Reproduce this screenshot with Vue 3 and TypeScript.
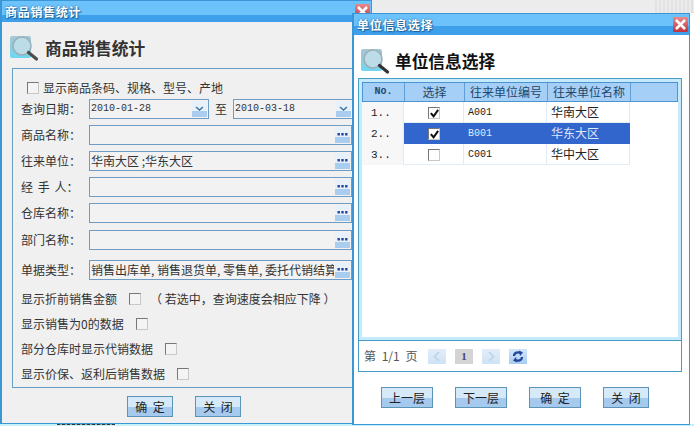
<script setup lang="ts">
interface Field { label: string; value: string; gap: number; clip?: boolean }
interface Opt { label: string; note?: string; gap: number; top: number }
interface Row { no: string; checked: boolean; code: string; name: string; active: boolean }

const fields: Field[] = [
  { label: '商品名称：', value: '', gap: 6 },
  { label: '往来单位：', value: '华南大区 ;华东大区', gap: 6 },
  { label: '经 手 人：', value: '', gap: 6 },
  { label: '仓库名称：', value: '', gap: 6 },
  { label: '部门名称：', value: '', gap: 7 },
  { label: '单据类型：', value: '销售出库单, 销售退货单, 零售单, 委托代销结算', gap: 10, clip: true },
]
const opts: Opt[] = [
  { label: '显示折前销售金额', note: '（ 若选中，查询速度会相应下降 ）', gap: 12, top: 11 },
  { label: '显示销售为0的数据', gap: 12, top: 9 },
  { label: '部分仓库时显示代销数据', gap: 12, top: 9 },
  { label: '显示价保、返利后销售数据', gap: 12, top: 9 },
]
const rows: Row[] = [
  { no: '1..', checked: true, code: 'A001', name: '华南大区', active: false },
  { no: '2..', checked: true, code: 'B001', name: '华东大区', active: true },
  { no: '3..', checked: false, code: 'C001', name: '华中大区', active: false },
]
const heads = ['No.', '选择', '往来单位编号', '往来单位名称', '']
const actions = ['上一层', '下一层', '确 定', '关 闭']
</script>

<template>
  <div class="desk">
    <div class="back-top"><span class="texture"></span></div>
    <div class="back-bottom"><span class="scrap"></span></div>

    <section class="win win-left">
      <header class="bar bar-left">
        <span class="bar-title">商品销售统计</span>
        <span class="close"><svg viewBox="0 0 15 15" width="15" height="15"><path d="M3 3 L12 12 M12 3 L3 12" stroke="#fff" stroke-width="2.6" /></svg></span>
      </header>
      <div class="heading heading-left">
        <svg class="lens" viewBox="0 0 30 28" width="30" height="28">
          <defs>
            <linearGradient id="lensA" x1="0" y1="0" x2="0" y2="1"><stop offset="0" stop-color="#a9c6d2" /><stop offset="1" stop-color="#6fd6f2" /></linearGradient>
          </defs>
          <rect x="1" y="2" width="21" height="22" rx="2" fill="url(#lensA)" />
          <circle cx="13" cy="12" r="9" fill="#bcdde8" stroke="#9ab0b8" stroke-width="1.6" />
          <path d="M19.5 18.5 L27.5 25" stroke="#4c4c4c" stroke-width="3.2" stroke-linecap="round" />
        </svg>
        <h1 class="heading-text">商品销售统计</h1>
      </div>
      <div class="group">
        <label class="top-check"><i class="cb"></i>显示商品条码、规格、型号、产地</label>
        <div class="row row-date">
          <span class="label">查询日期：</span>
          <div class="field date"><span class="mono">2010-01-28</span><span class="pick"><svg viewBox="0 0 15 15" width="15" height="15"><path d="M4 6 L7.5 9 L11 6" fill="none" stroke="#3a6ea5" stroke-width="1.4" /></svg></span></div>
          <span class="to">至</span>
          <div class="field date-to"><span class="mono">2010-03-18</span><span class="pick"><svg viewBox="0 0 15 15" width="15" height="15"><path d="M4 6 L7.5 9 L11 6" fill="none" stroke="#3a6ea5" stroke-width="1.4" /></svg></span></div>
        </div>
        <div v-for="f in fields" :key="f.label" class="row" :style="{ marginTop: f.gap + 'px' }">
          <span class="label">{{ f.label }}</span>
          <div class="field wide">
            <span class="value">{{ f.value }}</span>
            <span class="pick"><svg viewBox="0 0 15 15" width="15" height="15"><path d="M2.5 6h2.4v2.4h-2.4z M6.3 6h2.4v2.4h-2.4z M10.1 6h2.4v2.4h-2.4z" fill="#23479a" /></svg></span>
          </div>
        </div>
        <div v-for="o in opts" :key="o.label" class="opt" :style="{ marginTop: o.top + 'px' }">
          <span>{{ o.label }}</span>
          <i class="cb" :style="{ marginLeft: o.gap + 'px' }"></i>
          <span v-if="o.note" class="note">{{ o.note }}</span>
        </div>
      </div>
      <div class="left-actions">
        <button class="btn">确 定</button>
        <button class="btn">关 闭</button>
      </div>
    </section>

    <section class="win win-right">
      <header class="bar bar-right">
        <span class="bar-title">单位信息选择</span>
        <span class="close"><svg viewBox="0 0 15 15" width="15" height="15"><path d="M3 3 L12 12 M12 3 L3 12" stroke="#fff" stroke-width="2.6" /></svg></span>
      </header>
      <div class="heading heading-right">
        <svg class="lens" viewBox="0 0 30 28" width="30" height="28">
          <rect x="1" y="2" width="21" height="22" rx="2" fill="url(#lensA)" />
          <circle cx="13" cy="12" r="9" fill="#bcdde8" stroke="#9ab0b8" stroke-width="1.6" />
          <path d="M19.5 18.5 L27.5 25" stroke="#333" stroke-width="3.2" stroke-linecap="round" />
        </svg>
        <h1 class="heading-text dark">单位信息选择</h1>
      </div>
      <div class="panel">
        <div class="grid-wrap">
          <div class="grid-head">
            <span v-for="(h, i) in heads" :key="i" class="hcell" :class="{ mono: i === 0 }">{{ h }}</span>
          </div>
          <div v-for="r in rows" :key="r.no" class="grid-row" :class="{ active: r.active }">
            <span class="cell no">{{ r.no }}</span>
            <span class="cell center"><i class="cb tick"><svg v-if="r.checked" viewBox="0 0 12 12" width="11" height="11"><path d="M2 5.5 L5 9 L10 2" fill="none" stroke="#111" stroke-width="2.2" /></svg></i></span>
            <span class="cell code">{{ r.code }}</span>
            <span class="cell">{{ r.name }}</span>
          </div>
        </div>
        <div class="pager">
          <span class="page-text">第 1/1 页</span>
          <span class="pg">
            <svg viewBox="0 0 18 15" width="18" height="15"><path d="M11 3 L6.5 7.5 L11 12" fill="none" stroke="#c3d5e6" stroke-width="2" /></svg>
          </span>
          <span class="pg current">1</span>
          <span class="pg">
            <svg viewBox="0 0 18 15" width="18" height="15"><path d="M7 3 L11.5 7.5 L7 12" fill="none" stroke="#c3d5e6" stroke-width="2" /></svg>
          </span>
          <span class="pg refresh">
            <svg viewBox="0 0 18 15" width="18" height="15"><path d="M5 7 C5 3.5 9 2.5 12 4 M13 8 C13 11.5 9 12.5 6 11" fill="none" stroke="#23479a" stroke-width="2.2" /><path d="M10 1.5 L14 3.5 L11 7 Z M8 13.5 L4 11.5 L7 8 Z" fill="#23479a" /></svg>
          </span>
        </div>
      </div>
      <div class="right-actions">
        <button v-for="a in actions" :key="a" class="btn" :class="{ short: a === '关 闭' }">{{ a }}</button>
      </div>
    </section>
  </div>
</template>

<style>
html, body { margin: 0; padding: 0; background: #fff; }
</style>

<style scoped>
.desk {
  position: relative;
  width: 694px;
  height: 426px;
  overflow: hidden;
  background: #fff;
  font: 12px/16px "Noto Sans CJK SC", sans-serif;
  color: #333;
}
.back-top {
  position: absolute;
  left: 360px; top: 0; right: 0;
  height: 13px;
  background: #ececec;
}
.texture {
  position: absolute;
  left: 295px; top: 0;
  width: 39px; height: 13px;
  background: repeating-linear-gradient(90deg, #e2e2e2 0 2px, #ececec 2px 4px);
}
.back-bottom {
  position: absolute;
  left: 0; right: 0; bottom: 0;
  height: 2px;
  background: #c8f2fa;
}
.scrap {
  position: absolute;
  left: 57px; top: 0;
  width: 58px; height: 1px;
  background: repeating-linear-gradient(90deg, #333 0 3px, #8aa 3px 5px);
}
.win {
  position: absolute;
  box-sizing: border-box;
  border: 1px solid #3b96d6;
  border-left-width: 2px;
  display: flex;
  flex-direction: column;
  overflow: hidden;
}
.win-left {
  left: 0; top: 0;
  width: 372px; height: 424px;
  background: #f0f0f0;
}
.win-right {
  left: 352px; top: 13px;
  width: 338px; height: 412px;
  background: #fff;
  z-index: 2;
}
.bar {
  position: relative;
  flex: none;
  height: 21px;
  display: flex;
  align-items: center;
}
.bar-left { background: linear-gradient(#6cc2fb 0 14px, #3e9feb 14px 100%); }
.bar-right { background: linear-gradient(#6cc2fb 0 12px, #3e9feb 12px 100%); }
.bar-title {
  margin-left: 3px;
  font-weight: 700;
  letter-spacing: .7px;
  color: #fff;
  text-shadow: 0 0 2px #1d5f97, 1px 1px 1px #1d5f97;
}
.close {
  position: absolute;
  right: 1px; top: 3px;
  width: 15px; height: 15px;
  background: linear-gradient(#e88a8a, #c0333d);
  border-radius: 1px;
}
.close svg { display: block; }
.heading {
  display: flex;
  align-items: center;
  flex: none;
  box-sizing: border-box;
  padding-top: 6px;
}
.heading-left { height: 46px; padding-left: 7px; }
.heading-right { height: 43px; padding-left: 6px; padding-top: 8px; }
.lens { flex: none; }
.heading-text {
  margin: 0 0 0 6px;
  font-size: 16.7px;
  line-height: 24px;
  font-weight: 700;
  color: #333;
}
.heading-right .heading-text { margin-left: 5px; }
.heading-text.dark { color: #111; }
.group {
  box-sizing: border-box;
  margin-left: 10px;
  width: 360px;
  height: 320px;
  flex: none;
  border: 1px solid #6a9cc4;
  padding: 11px 0 0 8px;
}
.top-check {
  display: flex;
  align-items: center;
  margin-left: 6px;
  height: 16px;
  gap: 4px;
}
.cb {
  box-sizing: border-box;
  display: inline-block;
  flex: none;
  width: 12px; height: 12px;
  border: 1px solid #c8c8c8;
  border-top-color: #777;
  border-left-color: #777;
  background: #f4f4f4;
}
.row {
  display: flex;
  align-items: center;
  height: 20px;
}
.row-date { margin-top: 3px; }
.label {
  width: 68px;
  flex: none;
  white-space: pre;
  word-spacing: 2px;
}
.field {
  box-sizing: border-box;
  position: relative;
  flex: none;
  height: 20px;
  display: flex;
  align-items: center;
  border: 1px solid #6f9cc4;
  background: #f2f2f2;
  padding-left: 1px;
}
.date { width: 120px; }
.date-to { width: 120px; }
.wide { width: 263px; }
.to { width: 24px; text-align: center; flex: none; }
.mono {
  font-family: "Liberation Mono", monospace;
  font-size: 10px;
}
.value {
  white-space: nowrap;
  overflow: hidden;
  width: 243px;
}
.pick {
  position: absolute;
  right: 1px; top: 1px;
  width: 15px; height: 16px;
  background: linear-gradient(#e8f1fa 0 60%, #a9cdee 60% 100%);
  display: block;
}
.pick svg { display: block; }
.opt {
  display: flex;
  align-items: center;
  height: 16px;
}
.note { margin-left: 9px; white-space: nowrap; }
.left-actions {
  display: flex;
  gap: 22px;
  margin: 8px 0 0 125px;
}
.btn {
  box-sizing: border-box;
  width: 46px; height: 21px;
  padding: 0;
  border: 1px solid #5a95b8;
  background: linear-gradient(#d5e9f8 0 55%, #a6c9ee 55% 100%);
  color: #222;
  font: 12px/16px "Noto Sans CJK SC", sans-serif;
  word-spacing: 3px;
}
.panel {
  box-sizing: border-box;
  flex: none;
  width: 324px;
  height: 294px;
  margin-left: 4px;
  border: 1px solid #4a9cc8;
  display: flex;
  flex-direction: column;
}
.grid-wrap {
  box-sizing: border-box;
  flex: none;
  height: 261px;
  border: 3px solid #c5eafb;
  background: #fff;
}
.grid-head, .grid-row {
  display: grid;
  grid-template-columns: 42px 60px 83px 83px 48px;
}
.grid-head {
  height: 20px;
  background: #a5cff6;
  border: 1px solid #4c94cf;
  box-sizing: border-box;
}
.hcell {
  border-right: 1px solid #5f9fd6;
  text-align: center;
  line-height: 18px;
  color: #23486e;
  white-space: nowrap;
  overflow: hidden;
}
.hcell:last-child { border-right: 0; }
.hcell.mono { font-size: 10px; font-weight: 700; }
.grid-row {
  height: 21px;
  grid-template-columns: 42px 60px 83px 83px;
  border-bottom: 1px solid #e4eef6;
  width: 268px;
  box-sizing: border-box;
}
.cell {
  box-sizing: border-box;
  border-right: 1px solid #dfeaf4;
  line-height: 20px;
  padding: 0 0 0 4px;
  color: #222;
  display: block;
}
.cell.no {
  padding: 1px 0 0 9px;
  background: #f7f7f7;
  font-family: "Liberation Mono", monospace;
  font-size: 11px;
}
.cell.code {
  padding-top: 1px;
  font-family: "Liberation Mono", monospace;
  font-size: 10px;
}
.cell.center {
  padding: 0;
  display: flex;
  align-items: center;
  justify-content: center;
}
.active .cell:not(.no) { background: #3366cc; color: #dfe8fa; border-right-color: #3366cc; }
.cb.tick { background: #fff; position: relative; }
.cb.tick svg { position: absolute; left: 0; top: 0; }
.pager {
  flex: 1;
  border-top: 1px solid #4a9cc8;
  display: flex;
  align-items: center;
  padding-left: 5px;
}
.page-text { width: 64px; color: #555; white-space: pre; flex: none; word-spacing: 3px; }
.pg {
  flex: none;
  width: 18px; height: 15px;
  margin-right: 9px;
  background: linear-gradient(#e3eefa, #cfe2f6);
  display: block;
}
.pg svg { display: block; }
.pg.current {
  background: #d4d4d4;
  color: #45457a;
  font: 700 11px/15px "Liberation Serif", serif;
  text-align: center;
}
.pg.refresh { background: linear-gradient(#d3e6f9, #a8ccf0); margin-right: 0; }
.right-actions {
  display: flex;
  gap: 22px;
  margin: 15px 0 0 27px;
}
.right-actions .btn { width: 52px; }
.right-actions .btn.short { width: 46px; }
</style>
